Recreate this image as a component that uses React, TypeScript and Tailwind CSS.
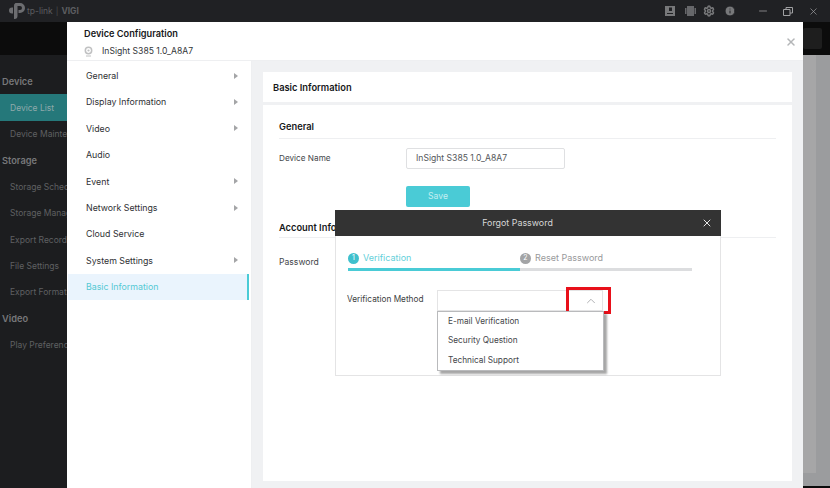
import { ChevronUp, Minus, Settings, Info, X } from 'lucide-react';

const font = { fontFamily: 'Inter, "Noto Sans", sans-serif' };

const sideMenu = [
  { label: 'Device', head: true },
  { label: 'Device List', active: true },
  { label: 'Device Maintenance' },
  { label: 'Storage', head: true },
  { label: 'Storage Schedule' },
  { label: 'Storage Manager' },
  { label: 'Export Records' },
  { label: 'File Settings' },
  { label: 'Export Format' },
  { label: 'Video', head: true },
  { label: 'Play Preferences' },
];

const configMenu = [
  { label: 'General', arrow: true },
  { label: 'Display Information', arrow: true },
  { label: 'Video', arrow: true },
  { label: 'Audio' },
  { label: 'Event', arrow: true },
  { label: 'Network Settings', arrow: true },
  { label: 'Cloud Service' },
  { label: 'System Settings', arrow: true },
  { label: 'Basic Information', active: true },
];

function TitleBar() {
  return (
    <div className="h-[22px] bg-[#202124] flex items-center shrink-0">
      <div className="flex items-center pl-[9px]">
        <svg width="16" height="16" viewBox="0 0 16 16" fill="#6c6d70">
          <path d="M6.500 0H11a5 5 0 0 1 0 10H9.500V7H11a2 2 0 0 0 0-4H8.500v10a3 3 0 0 1-3 3H5V3a3 3 0 0 1 1.500-3z" />
          <path d="M0 7.500a3 3 0 0 1 3-3h1v6H3a3 3 0 0 1-3-3z" />
        </svg>
        <span className="ml-[2px] text-[8.500px] text-[#5c5d60] whitespace-nowrap">tp-link</span>
        <span className="ml-[3px] text-[8px] text-[#4c4d50]">|</span>
        <span className="ml-[3px] text-[8.500px] font-bold text-[#5c5d60]">VIGI</span>
      </div>
      <div className="ml-auto flex items-center text-[#77787a]">
        <svg width="10" height="10" viewBox="0 0 10 10" fill="#77787a" className="mr-[9.500px]">
          <path d="M0 0h10v10H0z" />
          <path d="M4 1.500h3v3.500H4zM2 7h6v1H2z" fill="#202124" />
        </svg>
        <svg width="11" height="10" viewBox="0 0 11 10" fill="#66676a" className="mr-[7.500px]">
          <path d="M2 0h7v10H2zM0 2h1.500v6H0zM9.500 2H11v6H9.500z" />
        </svg>
        <Settings size={12} strokeWidth={3} className="mr-[9px]" />
        <Info size={12} fill="#77787a" stroke="#202124" strokeWidth={2} className="mr-[20.500px]" />
        <Minus size={12} strokeWidth={1.500} className="mr-[14.500px] text-[#a0a1a3]" />
        <svg width="10" height="9" viewBox="0 0 10 9" fill="none" stroke="#a0a1a3" className="mr-[15px]">
          <path d="M.5 2.500h6.500v6H.5zM3 2.500V.5h6.500v5.500H7" />
        </svg>
        <X size={11} strokeWidth={1.500} className="mr-[11px] text-[#a0a1a3]" />
      </div>
    </div>
  );
}

function Sidebar() {
  return (
    <div className="w-[67px] shrink-0 bg-[#1c1d1f] overflow-hidden">
      <div className="h-[33px] bg-[#0c0c0c]" />
      <div className="pt-[13px]">
        {sideMenu.map((item) =>
          item.head ? (
            <div key={item.label} className="h-[26.400px] flex items-center pl-[2px] pt-[1px] text-[9.250px] font-semibold text-[#77787a]">
              {item.label}
            </div>
          ) : (
            <div
              key={item.label}
              className={`h-[26.400px] flex items-center pl-[10px] pt-[1px] text-[8.500px] whitespace-nowrap ${item.active ? 'bg-[#25787a] text-[#8fa9aa]' : 'text-[#5f6062]'}`}
            >
              {item.label}
            </div>
          ),
        )}
      </div>
    </div>
  );
}

function ConfigModal() {
  return (
    <div className="absolute left-[67px] top-[22px] w-[736px] h-[466px] bg-white flex flex-col">
      <div className="h-[39px] shrink-0 border-b border-[#eeeff1] pl-[17px] pt-[5px] relative">
        <div className="text-[9.200px] font-semibold leading-[14px] text-[#17181a]">Device Configuration</div>
        <div className="flex items-center mt-[3px]">
          <svg width="9" height="11" viewBox="0 0 9 11" fill="none">
            <circle cx="4.500" cy="4.500" r="3.200" stroke="#c0c1c2" strokeWidth="1.500" />
            <circle cx="4.500" cy="4.500" r="1.100" fill="#c0c1c2" />
            <path d="M2 10h5" stroke="#c0c1c2" />
          </svg>
          <span className="ml-[9px] text-[8.600px] leading-[14px] text-[#333538]">InSight S385 1.0_A8A7</span>
        </div>
        <X size={12} strokeWidth={3} className="absolute right-[6px] top-[14px] text-[#b4b6b8]" />
      </div>
      <div className="flex-1 flex min-h-0">
        <div className="w-[185px] shrink-0 border-r border-[#eeeff1] pt-[1.500px] pr-[2px] pl-[1px]">
          {configMenu.map((item) => (
            <div
              key={item.label}
              className={`h-[26.400px] flex items-center justify-between pl-[18px] pr-[11px] text-[8.800px] ${item.active ? 'bg-[#eaf4fd] border-r-[2px] border-[#4acbd6] text-[#56c9d4]' : 'text-[#2f3134]'}`}
            >
              <span>{item.label}</span>
              {item.arrow && <span className="w-0 h-0 border-y-[3px] border-y-transparent border-l-[4px] border-l-[#a4a5a7]" />}
            </div>
          ))}
        </div>
        <div className="flex-1 bg-[#f0f1f3] pt-[11px] px-[11px] flex flex-col gap-[3px]">
          <div className="h-[30px] shrink-0 bg-white flex items-center pl-[10px] pt-[1px] text-[9.300px] font-semibold text-[#17181a]">Basic Information</div>
          <div className="flex-1 bg-white mb-[7px] px-[16px]">
            <div className="h-[34px] flex items-end pb-[4px] border-b border-[#eeeff1] text-[9.300px] font-semibold text-[#17181a]">General</div>
            <div className="flex items-center mt-[9px]">
              <span className="w-[127px] text-[8.200px] text-[#44464a]">Device Name</span>
              <div className="w-[159px] h-[21px] border border-[#dfe0e2] rounded-[2px] flex items-center pl-[9px] text-[8.600px] text-[#55575a]">InSight S385 1.0_A8A7</div>
            </div>
            <div className="ml-[127px] mt-[17px] w-[64px] h-[21px] bg-[#4acbd6] rounded-[2px] flex items-center justify-center text-[8.600px] text-[#c4eef1]">Save</div>
            <div className="mt-[11px] h-[20px] flex items-center border-b border-[#eeeff1] text-[9.300px] font-semibold text-[#17181a]">Account Information</div>
            <div className="mt-[18px] text-[8.600px] text-[#44464a]">Password</div>
          </div>
        </div>
      </div>
    </div>
  );
}

function ForgotDialog() {
  return (
    <div className="absolute left-[335px] top-[210px] w-[386px] h-[166px] flex flex-col">
      <div className="h-[26px] shrink-0 bg-[#333333] flex items-center justify-center pr-[21px] relative text-[8.900px] text-[#d6d6d6]">
        Forgot Password
        <X size={12} strokeWidth={2} className="absolute right-[8px] top-[7px] text-[#e6e6e6]" />
      </div>
      <div className="flex-1 bg-white border border-t-0 border-[#e4e4e5]">
        <div className="ml-[12px] mt-[16px] w-[344px]">
          <div className="flex items-center h-[12px]">
            <div className="w-[172px] flex items-center">
              <span className="w-[11px] h-[11px] rounded-full bg-[#3fc0cd] text-white text-[7px] flex items-center justify-center">1</span>
              <span className="ml-[4px] text-[9px] text-[#64d0da]">Verification</span>
            </div>
            <span className="w-[11px] h-[11px] rounded-full bg-[#a3a4a6] text-white text-[7px] flex items-center justify-center">2</span>
            <span className="ml-[4px] text-[9px] text-[#98999b]">Reset Password</span>
          </div>
          <div className="flex h-[3px] mt-[4px]">
            <div className="w-[172px] bg-[#4acbd6]" />
            <div className="flex-1 bg-[#dcdddf]" />
          </div>
        </div>
        <div className="flex items-center ml-[11px] mt-[19px]">
          <span className="w-[90px] -translate-y-[1px] text-[8.250px] text-[#3c3e41]">Verification Method</span>
          <div className="relative w-[166px] h-[21px] border border-[#e4e4e5] flex items-center justify-end pr-[4px]">
            <ChevronUp size={14} strokeWidth={1.500} className="text-[#a6a7a9]" />
            <div className="absolute left-[128px] -top-[4px] w-[45px] h-[27px] border-[3px] border-[#e8101a]" />
            <div className="absolute -left-[1px] top-[20px] w-[167px] h-[60px] bg-white border border-[#b9babc] shadow-[3px_3px_2px_rgba(0,0,0,0.35)] flex flex-col">
              <div className="h-[18.500px] shrink-0 flex items-center pl-[10px] text-[8.250px] text-[#44464a]">E-mail Verification</div>
              <div className="h-[20px] shrink-0 flex items-center pl-[10px] text-[8.250px] text-[#44464a]">Security Question</div>
              <div className="h-[20px] shrink-0 flex items-center pl-[10px] text-[8.250px] text-[#44464a]">Technical Support</div>
            </div>
          </div>
        </div>
      </div>
    </div>
  );
}

export default function App() {
  return (
    <div className="relative w-[830px] h-[488px] overflow-hidden bg-[#0c0c0c] flex flex-col" style={font}>
      <TitleBar />
      <div className="flex-1 flex min-h-0">
        <Sidebar />
        <div className="flex-1 flex flex-col">
          <div className="h-[33px] flex justify-end items-center pr-[8px]">
            <div className="w-[19px] h-[21px] bg-[#1e1e1e] rounded-[2px]" />
          </div>
          <div className="h-[431px] bg-[#9b9c9e] flex justify-end">
            <div className="w-[27px]">
              <div className="w-[13px] h-[418px] bg-[#a6a6a7]" />
            </div>
          </div>
        </div>
      </div>
      <ConfigModal />
      <ForgotDialog />
    </div>
  );
}
